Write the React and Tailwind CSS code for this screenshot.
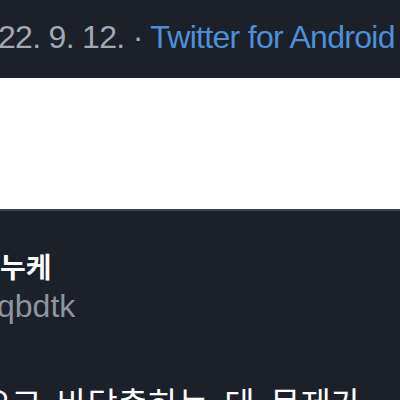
export default function App() {
  return (
    <div className="w-[400px] h-[400px] overflow-hidden bg-[#1b202b] flex flex-col" style={{ fontFamily: '"Liberation Sans", "Noto Sans CJK KR", sans-serif' }}>
      <div className="h-[78px] shrink-0 bg-[#1b202b] flex items-center overflow-hidden">
        <div className="whitespace-nowrap text-[32px] leading-none ml-[-2px] mt-[-5px] tracking-[-0.7px]">
          <span className="text-[#a2a9b3]">22. 9. 12. · </span>
          <span className="text-[#4f8fd6]">Twitter for Android</span>
        </div>
      </div>
      <div className="h-[131px] shrink-0 bg-white" />
      <div className="flex-1 bg-[#1b202b] border-t-[2px] border-[#3a3f48] flex flex-col overflow-hidden">
        <div className="mt-[41px] whitespace-nowrap text-[28px] leading-none font-bold text-white" style={{ fontFamily: '"Noto Sans CJK KR", sans-serif' }}>누케</div>
        <div className="mt-[10px] whitespace-nowrap text-[32px] leading-none text-[#8e959f] ml-[-3px]">qbdtk</div>
        <div className="mt-[64px] whitespace-nowrap text-[33px] leading-none text-white ml-[-19px] [word-spacing:8px]" style={{ fontFamily: '"Noto Sans CJK KR", sans-serif' }}>오고 바닥출하는 데 문제가</div>
      </div>
    </div>
  );
}
